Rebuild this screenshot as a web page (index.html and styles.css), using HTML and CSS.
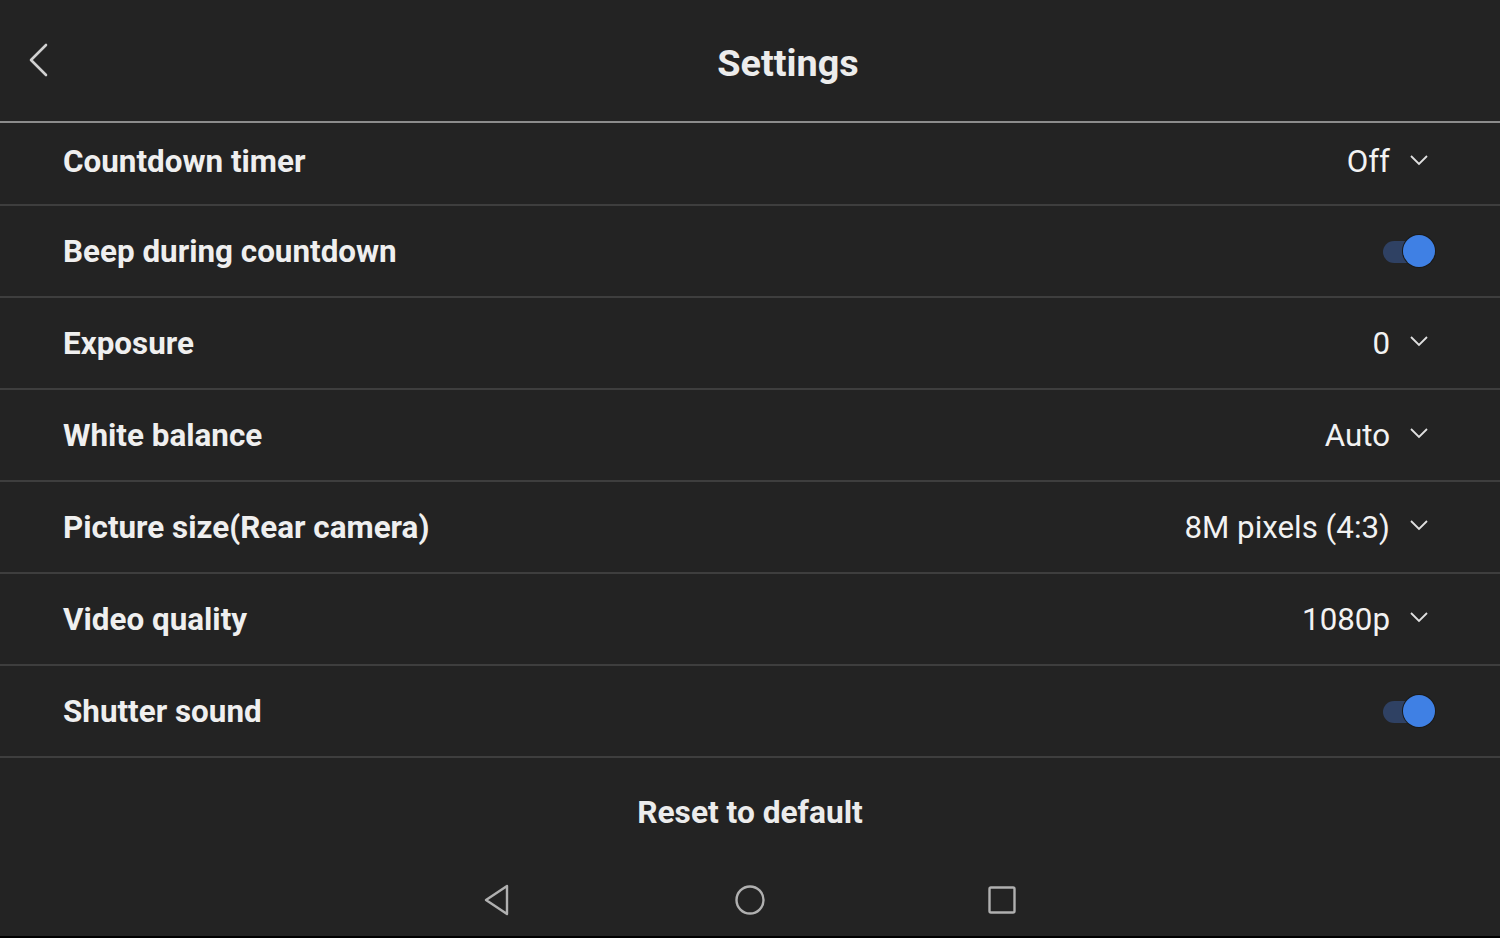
FILE: index.html
```html
<!DOCTYPE html>
<html>
<head>
<meta charset="utf-8">
<link rel="stylesheet" href="styles.css">
</head>
<body>
<div class="screen">
  <header class="topbar">
    <button class="back" aria-label="Back">
      <svg width="22" height="34" viewBox="0 0 22 34"><path d="M19 2 L4 17 L19 32" fill="none" stroke="#d0d0d0" stroke-width="2.6" stroke-linecap="round" stroke-linejoin="round"/></svg>
    </button>
    <h1 class="title">Settings</h1>
  </header>
  <ul class="list">
    <li class="row first"><span class="label">Countdown timer</span><span class="value">Off<svg class="chev" width="20" height="12" viewBox="0 0 20 12"><path d="M2 2 L10 10 L18 2" fill="none" stroke="#e0e0e0" stroke-width="1.8"/></svg></span></li>
    <li class="row"><span class="label">Beep during countdown</span><span class="toggle"><span class="track"></span><span class="knob"></span></span></li>
    <li class="row"><span class="label">Exposure</span><span class="value">0<svg class="chev" width="20" height="12" viewBox="0 0 20 12"><path d="M2 2 L10 10 L18 2" fill="none" stroke="#e0e0e0" stroke-width="1.8"/></svg></span></li>
    <li class="row"><span class="label">White balance</span><span class="value">Auto<svg class="chev" width="20" height="12" viewBox="0 0 20 12"><path d="M2 2 L10 10 L18 2" fill="none" stroke="#e0e0e0" stroke-width="1.8"/></svg></span></li>
    <li class="row"><span class="label">Picture size(Rear camera)</span><span class="value">8M pixels (4:3)<svg class="chev" width="20" height="12" viewBox="0 0 20 12"><path d="M2 2 L10 10 L18 2" fill="none" stroke="#e0e0e0" stroke-width="1.8"/></svg></span></li>
    <li class="row"><span class="label">Video quality</span><span class="value">1080p<svg class="chev" width="20" height="12" viewBox="0 0 20 12"><path d="M2 2 L10 10 L18 2" fill="none" stroke="#e0e0e0" stroke-width="1.8"/></svg></span></li>
    <li class="row"><span class="label">Shutter sound</span><span class="toggle"><span class="track"></span><span class="knob"></span></span></li>
  </ul>
  <div class="reset">Reset to default</div>
  <nav class="navbar">
    <svg width="30" height="32" viewBox="0 0 30 32"><path d="M24 2 L3 16 L24 30 Z" fill="none" stroke="#b0b0b0" stroke-width="2.4" stroke-linejoin="round"/></svg>
    <svg width="32" height="32" viewBox="0 0 32 32"><circle cx="16" cy="16" r="13.5" fill="none" stroke="#b0b0b0" stroke-width="2.4"/></svg>
    <svg width="30" height="30" viewBox="0 0 30 30"><rect x="2.5" y="2.5" width="25" height="25" rx="1.5" fill="none" stroke="#b0b0b0" stroke-width="2.4"/></svg>
  </nav>
</div>
</body>
</html>
```
FILE: styles.css
```css
* { box-sizing: border-box; }
html, body { margin: 0; padding: 0; background: #000; }
body { font-family: Roboto, "Noto Sans", sans-serif; color: #ececec; }
.screen {
  width: 1500px;
  height: 936px;
  background: #232323;
  display: flex;
  flex-direction: column;
}
.topbar {
  height: 123px;
  border-bottom: 2px solid #8c8c8c;
  display: flex;
  align-items: center;
  position: relative;
}
.back {
  position: absolute;
  left: 27px;
  top: 43px;
  background: none;
  border: 0;
  padding: 0;
  line-height: 0;
}
.title {
  margin: 0 0 0 76px;
  flex: 1;
  text-align: center;
  font-size: 37.8px;
  font-weight: 700;
  color: #ececec;
  padding-top: 4px;
}
.list { list-style: none; margin: 0; padding: 0; }
.row {
  height: 92px;
  border-bottom: 2px solid #3e3e3e;
  display: flex;
  align-items: center;
  justify-content: space-between;
  padding: 0 66px 0 63px;
}
.row.first { height: 83px; padding-bottom: 4px; }
.label { font-size: 31.4px; font-weight: 700; color: #efefef; }
.value {
  font-size: 31.3px;
  font-weight: 400;
  color: #f2f2f2;
  display: flex;
  align-items: center;
  gap: 19px;
  margin-right: 5px;
}
.chev { margin-top: -4px; }
.toggle { position: relative; width: 52px; height: 34px; margin-right: -1px; }
.track {
  position: absolute; left: 0; top: 7px;
  width: 40px; height: 22px; border-radius: 11px;
  background: #2f4163;
}
.knob {
  position: absolute; right: 0; top: 1px;
  width: 32px; height: 32px; border-radius: 50%;
  background: #3f80e4;
  box-shadow: 0 0 0 1px #1a1a1a;
}
.reset {
  height: 108px;
  display: flex;
  align-items: center;
  justify-content: center;
  font-size: 31.7px;
  font-weight: 700;
  color: #ececec;
}
.navbar {
  flex: 1;
  display: flex;
  align-items: center;
  justify-content: center;
  gap: 221px;
  padding-bottom: 2px;
}
```
